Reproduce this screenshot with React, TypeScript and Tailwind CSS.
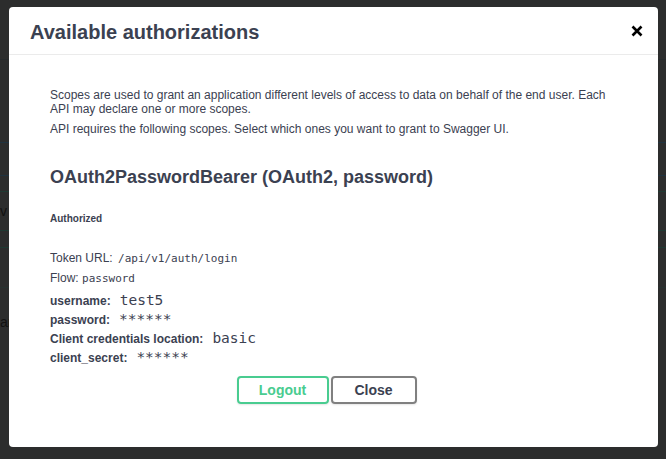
export default function App() {
  return (
    <div className="relative h-[459px] w-[666px] overflow-hidden bg-[#2c2d2d] font-['Liberation_Sans',Arial,sans-serif]">
      {/* dimmed page behind the dialog */}
      <div className="flex flex-col pt-[59px] text-[14px] text-[#1a1a1a]">
        <div className="h-[83px] border-t border-[#262a2c]" />
        <div className="h-[33px] border-t border-[#1f3340]" />
        <div className="h-[16px] border-t border-[#1f3340]" />
        <div className="flex h-[39px] items-center border-t border-[#1f3a33] text-[#111]">v u</div>
        <div className="h-[17px] border-t border-[#1f3a33]" />
        <div className="h-[40px] border-t border-[#1f3a33]" />
        <div className="flex h-[70px] items-center border-t border-[#273230] text-[#111]">are</div>
      </div>

      <div className="absolute left-[9px] top-[7px] flex h-[440px] w-[649px] flex-col rounded-[4px] bg-white text-[#3b4151]">
        <div className="flex h-[48px] items-center justify-between border-b border-[#ebebeb] pl-[21px] pr-[15px]">
          <h3 className="mt-[2px] text-[20px] font-bold">Available authorizations</h3>
          <svg width="12" height="12" viewBox="0 0 12 12" className="mt-[1px]">
            <path d="M1.5 1.5 L10.5 10.5 M10.5 1.5 L1.5 10.5" stroke="#000" strokeWidth="2.6" />
          </svg>
        </div>

        <div className="flex flex-col px-[41px] pt-[33px] text-[12px] leading-[14px]">
          <p>
            Scopes are used to grant an application different levels of access to data on behalf of the end user. Each API may
            declare one or more scopes.
          </p>
          <p className="mt-[6px]">API requires the following scopes. Select which ones you want to grant to Swagger UI.</p>

          <h4 className="mt-[30px] text-[18px] font-bold leading-[22px]">OAuth2PasswordBearer (OAuth2, password)</h4>

          <h6 className="mt-[24px] text-[10px] font-bold">Authorized</h6>

          <p className="mt-[25px]">
            Token URL:{" "}
            <code className="ml-[2px] font-['DejaVu_Sans_Mono',monospace] text-[11px]">/api/v1/auth/login</code>
          </p>
          <p className="mt-[5px]">
            Flow: <code className="font-['DejaVu_Sans_Mono',monospace] text-[11px]">password</code>
          </p>

          <div className="mt-[7px] flex flex-col gap-[4px] text-[12px] font-bold">
            <div className="flex items-baseline gap-[9px]">
              <span>username:</span>
              <code className="font-['DejaVu_Sans_Mono',monospace] text-[14.5px] font-normal">test5</code>
            </div>
            <div className="flex items-baseline gap-[9px]">
              <span>password:</span>
              <code className="font-['DejaVu_Sans_Mono',monospace] text-[14.5px] font-normal">******</code>
            </div>
            <div className="flex items-baseline gap-[9px]">
              <span>Client credentials location:</span>
              <code className="font-['DejaVu_Sans_Mono',monospace] text-[14.5px] font-normal">basic</code>
            </div>
            <div className="flex items-baseline gap-[9px]">
              <span>client_secret:</span>
              <code className="font-['DejaVu_Sans_Mono',monospace] text-[14.5px] font-normal">******</code>
            </div>
          </div>

          <div className="mt-[11px] flex justify-center gap-[2px] pr-[14px]">
            <button className="h-[28px] w-[92px] rounded-[4px] border-2 border-[#49cc90] text-[14px] font-bold text-[#49cc90] shadow-[0_1px_2px_rgba(0,0,0,0.1)]">
              Logout
            </button>
            <button className="h-[28px] w-[86px] rounded-[4px] border-2 border-[#808080] text-[14px] font-bold text-[#3b4151] shadow-[0_1px_2px_rgba(0,0,0,0.1)]">
              Close
            </button>
          </div>
        </div>
      </div>
    </div>
  );
}
